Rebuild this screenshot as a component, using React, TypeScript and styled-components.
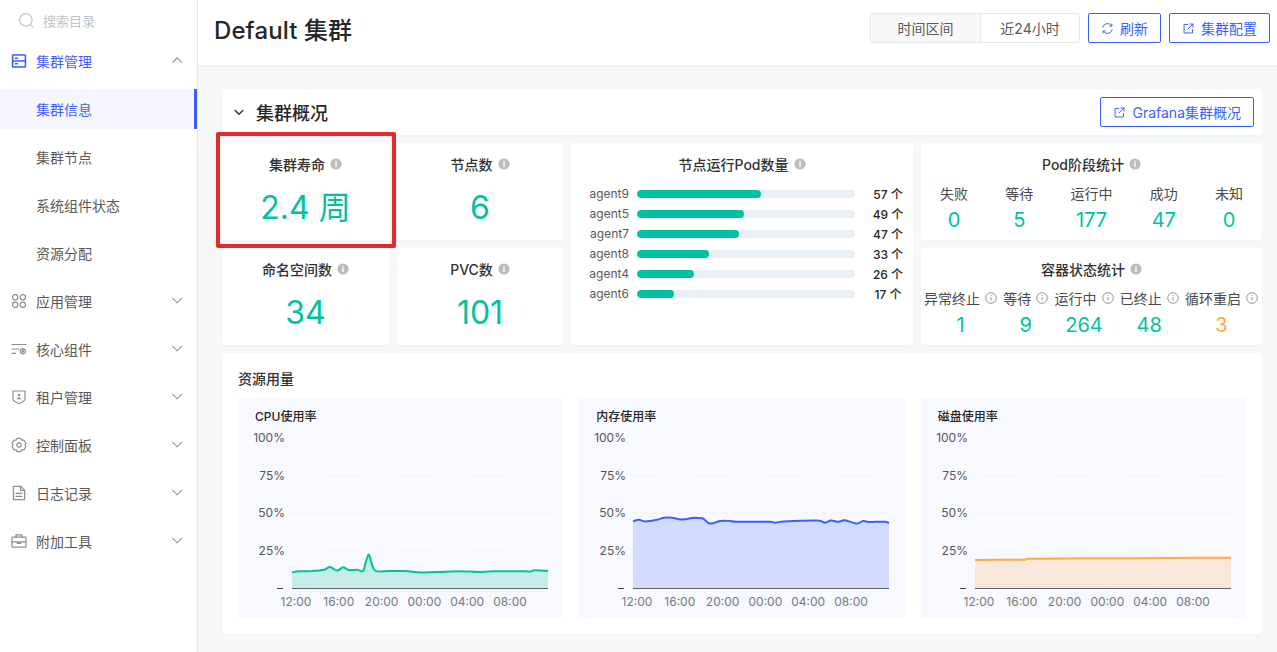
import React from 'react';
import styled, { createGlobalStyle } from 'styled-components';

const GlobalStyle = createGlobalStyle`
  html, body {
    margin: 0;
    padding: 0;
    height: 100%;
    overflow: hidden;
    background: #f8f8f8;
    font-family: Inter, "Noto Sans CJK SC", sans-serif;
  }
  * { box-sizing: border-box; }
`;

const BLUE = '#3d5eff';
const GREEN = '#00c2a0';
const ORANGE = '#ffa940';

const Layout = styled.div`
  display: flex;
  width: 1277px;
  height: 652px;
  overflow: hidden;
`;

const Sidebar = styled.aside`
  flex: 0 0 198px;
  height: 100%;
  background: #fff;
  border-right: 1px solid #e4e5ee;
`;

const SearchBox = styled.div`
  display: flex;
  align-items: center;
  gap: 8px;
  height: 37px;
  padding: 4px 0 0 18px;
  color: #c0c2c9;
  font-size: 13px;
`;

const NavList = styled.nav`
  display: flex;
  flex-direction: column;
  gap: 8px;
  padding-top: 4px;
`;

const NavItem = styled.div<{ $active?: boolean; $open?: boolean }>`
  display: flex;
  align-items: center;
  height: 40px;
  padding-left: ${p => (p.$open === undefined ? '36px' : '11px')};
  padding-right: 12px;
  font-size: 14px;
  color: ${p => (p.$active ? BLUE : '#595959')};
  background: ${p => (p.$active && p.$open === undefined ? '#f5f6fe' : 'transparent')};
  border-right: ${p => (p.$active && p.$open === undefined ? `3px solid ${BLUE}` : 'none')};
`;

const NavIcon = styled.span`
  display: flex;
  width: 25px;
  flex: none;
`;

const NavLabel = styled.span`
  flex: 1;
`;

const Main = styled.main`
  flex: 1;
  min-width: 0;
  display: flex;
  flex-direction: column;
`;

const Header = styled.header`
  display: flex;
  align-items: center;
  justify-content: space-between;
  height: 65px;
  padding: 0 7px 9px 16px;
  background: #fff;
  box-shadow: 0 2px 6px rgba(0, 0, 0, 0.03);
`;

const PageTitle = styled.h1`
  margin: 0;
  font-size: 24px;
  font-weight: 500;
  color: #262626;
  letter-spacing: 0.1px;
`;

const HeaderActions = styled.div`
  display: flex;
  align-items: center;
  gap: 8px;
`;

const Segment = styled.div`
  display: flex;
  height: 30px;
  border: 1px solid #e8e8e8;
  border-radius: 2px;
  font-size: 14px;
  color: #595959;
`;

const SegmentCell = styled.div<{ $muted?: boolean }>`
  display: flex;
  align-items: center;
  justify-content: center;
  width: ${p => (p.$muted ? '110px' : '98px')};
  background: ${p => (p.$muted ? '#f8f8f8' : '#fff')};
  border-right: ${p => (p.$muted ? '1px solid #e8e8e8' : 'none')};
`;

const LinkButton = styled.button`
  display: inline-flex;
  align-items: center;
  justify-content: center;
  gap: 6px;
  height: 30px;
  padding: 0 12px;
  background: #fff;
  border: 1px solid ${BLUE};
  border-radius: 2px;
  color: ${BLUE};
  font: inherit;
  font-size: 14px;
`;

const Content = styled.div`
  display: flex;
  flex-direction: column;
  gap: 8px;
  padding: 24px 15px 0 24px;
`;

const Card = styled.section`
  background: #fff;
  border-radius: 4px;
  box-shadow: 0 2px 6px rgba(0, 0, 0, 0.025);
`;

const SectionBar = styled(Card)`
  display: flex;
  align-items: center;
  justify-content: space-between;
  height: 46px;
  padding: 0 8px 0 11px;
`;

const SectionTitle = styled.h2`
  display: flex;
  align-items: center;
  gap: 11px;
  margin: 0;
  font-size: 18px;
  font-weight: 500;
  color: #262626;
`;

const OverviewGrid = styled.div`
  display: grid;
  grid-template-columns: 167px 166px 342px 341px;
  grid-template-rows: 97px 97px;
  gap: 8px;
`;

const StatCard = styled(Card)`
  position: relative;
  padding-top: 11px;
  text-align: center;
`;

const Highlight = styled.div`
  position: absolute;
  top: -11px;
  left: -6px;
  right: -7px;
  bottom: -8px;
  border: 4px solid #e52a2a;
  border-radius: 2px;
`;

const CardTitle = styled.div`
  display: flex;
  align-items: center;
  justify-content: center;
  gap: 5px;
  height: 20px;
  font-size: 14px;
  font-weight: 500;
  color: #333;
`;

const BigValue = styled.div`
  margin-top: 14px;
  font-size: 32px;
  line-height: 40px;
  color: ${GREEN};
`;

const PodCard = styled(Card)`
  grid-column: 3;
  grid-row: 1 / 3;
  padding-top: 11px;
`;

const BarList = styled.div`
  display: flex;
  flex-direction: column;
  gap: 4px;
  margin-top: 11px;
`;

const BarRow = styled.div`
  display: grid;
  grid-template-columns: 58px 218px 50px;
  gap: 8px;
  align-items: center;
  height: 16px;
`;

const BarLabel = styled.span`
  text-align: right;
  font-size: 12px;
  color: #595959;
`;

const BarTrack = styled.div`
  height: 8px;
  border-radius: 4px;
  background: #e9edf6;
  overflow: hidden;
`;

const BarFill = styled.div`
  height: 100%;
  border-radius: 4px;
  background: ${GREEN};
`;

const BarValue = styled.span`
  text-align: center;
  font-size: 12px;
  font-weight: 500;
  color: #262626;
`;

const MetricCard = styled(Card)`
  padding-top: 11px;
`;

const MetricRow = styled.div<{ $tight?: boolean }>`
  display: flex;
  justify-content: space-between;
  margin-top: 9px;
  padding: 0 ${p => (p.$tight ? '4px' : '19px')} 0 ${p => (p.$tight ? '3px' : '19px')};
`;

const Metric = styled.div`
  display: flex;
  flex-direction: column;
  align-items: center;
`;

const MetricLabel = styled.div`
  display: flex;
  align-items: center;
  gap: 5px;
  height: 20px;
  font-size: 14px;
  color: #4a4a4a;
`;

const MetricValue = styled.div<{ $warn?: boolean }>`
  margin-top: 4px;
  font-size: 20px;
  line-height: 26px;
  color: ${p => (p.$warn ? ORANGE : GREEN)};
`;

const UsageCard = styled(Card)`
  height: 281px;
  padding: 16px 16px 0;
`;

const UsageTitle = styled.div`
  font-size: 14px;
  font-weight: 500;
  line-height: 20px;
  color: #333;
`;

const ChartGrid = styled.div`
  display: grid;
  grid-template-columns: repeat(3, 1fr);
  gap: 16px;
  margin-top: 9px;
`;

const ChartPanel = styled.div`
  height: 220px;
  padding-top: 11px;
  border-radius: 4px;
  background: #f8f9ff;
`;

const ChartTitle = styled.div`
  padding-left: 17px;
  font-size: 12px;
  font-weight: 500;
  line-height: 16px;
  color: #262626;
`;

const ChartSvg = styled.svg`
  display: block;
  margin-top: 5px;
`;

const AxisText = styled.text<{ $dim?: boolean }>`
  font-size: 12px;
  fill: ${p => (p.$dim ? '#77787c' : '#55565a')};
`;

const Icon: React.FC<{ size?: number; color?: string; children: React.ReactNode }> = ({ size = 16, color = 'currentColor', children }) => (
  <svg width={size} height={size} viewBox="0 0 16 16" fill="none" stroke={color} strokeWidth="1.2" strokeLinecap="round" strokeLinejoin="round" style={{ flex: 'none' }}>
    {children}
  </svg>
);

const SearchIcon = () => (
  <Icon size={17} color="#c4c6cc">
    <circle cx="7.4" cy="7.4" r="5.9" />
    <path d="M12 12l2.2 2.2" />
  </Icon>
);

const ChevronUp = () => (
  <Icon size={14} color="#85878e"><path d="M2 9.5l5-5 5 5" /></Icon>
);

const ChevronDown = () => (
  <Icon size={14} color="#85878e"><path d="M2 5l5 5 5-5" /></Icon>
);

const ClusterIcon = () => (
  <Icon color={BLUE}>
    <rect x="1.6" y="2" width="12.8" height="12" rx="0.6" strokeWidth="1.6" />
    <path d="M1.6 8h12.8M4.4 5.2h2M4.4 10.8h2" strokeWidth="1.6" />
  </Icon>
);

const AppsIcon = () => (
  <Icon color="#8c8e94">
    <rect x="1.6" y="1.6" width="5.2" height="5.2" rx="2.4" />
    <rect x="9.2" y="1.6" width="5.2" height="5.2" rx="2.4" />
    <rect x="1.6" y="9.2" width="5.2" height="5.2" rx="2.4" />
    <rect x="9.2" y="9.2" width="5.2" height="5.2" rx="2.4" />
  </Icon>
);

const CoreIcon = () => (
  <Icon color="#8c8e94">
    <path d="M1 3.5h14M1 8h7M1 12.3h3.5" />
    <path d="M11.8 7.6l2.4 1.3v2.7l-2.4 1.3-2.4-1.3V8.9z" />
    <circle cx="11.8" cy="10.2" r="0.7" />
  </Icon>
);

const TenantIcon = () => (
  <Icon color="#8c8e94">
    <path d="M2 2h12v8c0 1.9-3.4 3.5-6 4.6-2.6-1.1-6-2.7-6-4.6z" />
    <circle cx="8" cy="6" r="1.3" fill="#8c8e94" stroke="none" />
    <path d="M5.4 10.2c.5-1.3 1.5-1.8 2.6-1.8s2.1.5 2.6 1.8z" fill="#8c8e94" stroke="none" />
  </Icon>
);

const ControlIcon = () => (
  <Icon color="#8c8e94">
    <path d="M6 1.4h4l.9 1.8 2-.1 2 3.4-1.100 1.500 1.100 1.500-2 3.400-2-.1-.9 1.800H6l-.9-1.800-2 .1-2-3.400L2.200 8 1.100 6.500l2-3.400 2 .1z" />
    <circle cx="8" cy="8" r="2.1" />
  </Icon>
);

const LogIcon = () => (
  <Icon color="#8c8e94">
    <path d="M2.4 1.4h7.400l3.800 3.800v9.400H2.400z" />
    <path d="M9.6 1.4v4h4M5 8.400h6M5 11.400h6" />
  </Icon>
);

const ToolIcon = () => (
  <Icon color="#8c8e94">
    <rect x="1" y="4.2" width="14" height="10" rx="0.6" />
    <path d="M5 4.2V1.8h6v2.400M1 8.800h14M6.400 8.800v1.600h3.200V8.800" />
  </Icon>
);

const ExternalIcon = () => (
  <Icon size={13}>
    <path d="M7 3H2.5v10.500H13V9" />
    <path d="M9.5 2.5h4v4M13.500 2.500L7.500 8.500" />
  </Icon>
);

const RefreshIcon = () => (
  <Icon size={13}>
    <path d="M2.2 6.4A6 6 0 0 1 13 4.6M13.8 9.6A6 6 0 0 1 3 11.4" />
    <path d="M13.4 2.4v2.600h-2.600M2.6 13.6V11h2.600" />
  </Icon>
);

const InfoFilled = () => (
  <svg width="12" height="12" viewBox="0 0 12 12" style={{ flex: 'none' }}>
    <circle cx="6" cy="6" r="5.6" fill="#bdbdbd" />
    <rect x="5.3" y="5" width="1.4" height="4" fill="#fff" />
    <rect x="5.3" y="2.9" width="1.4" height="1.4" fill="#fff" />
  </svg>
);

const InfoOutline = () => (
  <svg width="12" height="12" viewBox="0 0 12 12" fill="none" style={{ flex: 'none' }}>
    <circle cx="6" cy="6" r="5.3" stroke="#8c8c8c" strokeWidth="0.9" />
    <path d="M6 5.2v3.3M6 3.2v.9" stroke="#8c8c8c" strokeWidth="1" />
  </svg>
);

type Point = [number, number];

const PLOT_LEFT = 54;
const PLOT_WIDTH = 256;
const PLOT_TOP = 8;
const PLOT_HEIGHT = 150;

const toX = (offset: number) => PLOT_LEFT + offset;
const toY = (value: number) => PLOT_TOP + PLOT_HEIGHT * (1 - value / 100);

// catmull-rom through the sampled points, so the line does not look faceted
function smoothPath(points: Point[]) {
  const pts = points.map(([x, v]) => [toX(x), toY(v)]);
  let d = `M${pts[0][0]} ${pts[0][1]}`;
  for (let i = 0; i < pts.length - 1; i++) {
    const p0 = pts[i - 1] || pts[i];
    const p1 = pts[i];
    const p2 = pts[i + 1];
    const p3 = pts[i + 2] || p2;
    const c1x = p1[0] + (p2[0] - p0[0]) / 6;
    const c1y = p1[1] + (p2[1] - p0[1]) / 6;
    const c2x = p2[0] - (p3[0] - p1[0]) / 6;
    const c2y = p2[1] - (p3[1] - p1[1]) / 6;
    d += `C${c1x.toFixed(1)} ${c1y.toFixed(1)} ${c2x.toFixed(1)} ${c2y.toFixed(1)} ${p2[0].toFixed(1)} ${p2[1].toFixed(1)}`;
  }
  return d;
}

const Y_TICKS = [100, 75, 50, 25];
const X_TICKS = ['12:00', '16:00', '20:00', '00:00', '04:00', '08:00'];

const cpuData: Point[] = [
  [0, 10.4], [7, 11.2], [20, 11.3], [32, 12.2], [38, 14], [45, 11.6], [51, 13.8], [57, 12], [65, 12.2], [71, 11.3],
  [74, 17.8], [77, 22.2], [80, 15.5], [84, 11.3], [97, 11.3], [113, 11.3], [130, 10.4], [150, 10.7],
  [167, 11.1], [187, 10.7], [200, 11.1], [233, 11.1], [238, 10.9], [243, 11.8], [256, 11.3],
];

const memData: Point[] = [
  [0, 44.4], [6, 45.5], [12, 44.4], [24, 45.5], [31, 46.9], [39, 46.9], [46, 45.8], [52, 45.8],
  [59, 46.7], [69, 46.5], [72, 45.3], [76, 43.1], [81, 43.3], [87, 44.7], [97, 44.7], [104, 44.2],
  [137, 44.2], [142, 43.5], [151, 44.4], [184, 44.9], [192, 43.5], [198, 44.9], [206, 44.2], [212, 45.1],
  [224, 42.9], [230, 44.7], [236, 44], [251, 44.2], [256, 43.3],
];

const diskData: Point[] = [
  [0, 18.7], [47, 18.9], [52, 19.5], [65, 19.5], [110, 19.8], [150, 19.8], [190, 20], [256, 20.2],
];

const UsageChart: React.FC<{ title: string; data: Point[]; line: string; fill: string }> = ({ title, data, line, fill }) => {
  const path = smoothPath(data);
  const base = toY(0);
  return (
    <ChartPanel>
      <ChartTitle>{title}</ChartTitle>
      <ChartSvg width="325" height="186" viewBox="0 0 325 186">
        {Y_TICKS.map(t => (
          <g key={t}>
            <line x1={PLOT_LEFT} x2={PLOT_LEFT + PLOT_WIDTH} y1={toY(t)} y2={toY(t)} stroke="#eceef4" strokeDasharray="5 4" />
            <AxisText x={PLOT_LEFT - 7} y={toY(t) + 4} textAnchor="end">{t}%</AxisText>
          </g>
        ))}
        <path d={`${path}L${toX(PLOT_WIDTH)} ${base}L${toX(0)} ${base}Z`} fill={fill} />
        <path d={path} fill="none" stroke={line} strokeWidth="2" strokeLinejoin="round" />
        <line x1={PLOT_LEFT} x2={PLOT_LEFT + PLOT_WIDTH} y1={base + 0.5} y2={base + 0.5} stroke="#5f6066" />
        <line x1={PLOT_LEFT - 15} x2={PLOT_LEFT - 9} y1={base + 0.5} y2={base + 0.5} stroke="#45464a" />
        {X_TICKS.map((t, i) => (
          <AxisText key={t} $dim x={58 + i * 42.8} y={base + 18} textAnchor="middle">{t}</AxisText>
        ))}
      </ChartSvg>
    </ChartPanel>
  );
};

const NAV_ITEMS = [
  { label: '应用管理', icon: <AppsIcon /> },
  { label: '核心组件', icon: <CoreIcon /> },
  { label: '租户管理', icon: <TenantIcon /> },
  { label: '控制面板', icon: <ControlIcon /> },
  { label: '日志记录', icon: <LogIcon /> },
  { label: '附加工具', icon: <ToolIcon /> },
];

const SUB_ITEMS = ['集群信息', '集群节点', '系统组件状态', '资源分配'];

const AGENTS = [
  { name: 'agent9', count: 57 },
  { name: 'agent5', count: 49 },
  { name: 'agent7', count: 47 },
  { name: 'agent8', count: 33 },
  { name: 'agent4', count: 26 },
  { name: 'agent6', count: 17 },
];

const POD_PHASES = [
  { label: '失败', value: 0 },
  { label: '等待', value: 5 },
  { label: '运行中', value: 177 },
  { label: '成功', value: 47 },
  { label: '未知', value: 0 },
];

const CONTAINER_STATES = [
  { label: '异常终止', value: 1 },
  { label: '等待', value: 9 },
  { label: '运行中', value: 264 },
  { label: '已终止', value: 48 },
  { label: '循环重启', value: 3, warn: true },
];

const App: React.FC = () => (
  <Layout>
    <GlobalStyle />
    <Sidebar>
      <SearchBox>
        <SearchIcon />
        搜索目录
      </SearchBox>
      <NavList>
        <NavItem $active $open>
          <NavIcon><ClusterIcon /></NavIcon>
          <NavLabel>集群管理</NavLabel>
          <ChevronUp />
        </NavItem>
        {SUB_ITEMS.map((label, i) => (
          <NavItem key={label} $active={i === 0}>{label}</NavItem>
        ))}
        {NAV_ITEMS.map(item => (
          <NavItem key={item.label} $open={false}>
            <NavIcon>{item.icon}</NavIcon>
            <NavLabel>{item.label}</NavLabel>
            <ChevronDown />
          </NavItem>
        ))}
      </NavList>
    </Sidebar>
    <Main>
      <Header>
        <PageTitle>Default 集群</PageTitle>
        <HeaderActions>
          <Segment>
            <SegmentCell $muted>时间区间</SegmentCell>
            <SegmentCell>近24小时</SegmentCell>
          </Segment>
          <LinkButton><RefreshIcon />刷新</LinkButton>
          <LinkButton><ExternalIcon />集群配置</LinkButton>
        </HeaderActions>
      </Header>
      <Content>
        <SectionBar>
          <SectionTitle>
            <Icon size={12} color="#333"><path d="M3 6l5 5 5-5" strokeWidth="2" /></Icon>
            集群概况
          </SectionTitle>
          <LinkButton><ExternalIcon />Grafana集群概况</LinkButton>
        </SectionBar>
        <OverviewGrid>
          <StatCard>
            <CardTitle>集群寿命 <InfoFilled /></CardTitle>
            <BigValue>2.4 周</BigValue>
            <Highlight />
          </StatCard>
          <StatCard>
            <CardTitle>节点数 <InfoFilled /></CardTitle>
            <BigValue>6</BigValue>
          </StatCard>
          <PodCard>
            <CardTitle>节点运行Pod数量 <InfoFilled /></CardTitle>
            <BarList>
              {AGENTS.map(a => (
                <BarRow key={a.name}>
                  <BarLabel>{a.name}</BarLabel>
                  <BarTrack><BarFill style={{ width: `${a.count}%` }} /></BarTrack>
                  <BarValue>{a.count} 个</BarValue>
                </BarRow>
              ))}
            </BarList>
          </PodCard>
          <MetricCard>
            <CardTitle>Pod阶段统计 <InfoFilled /></CardTitle>
            <MetricRow>
              {POD_PHASES.map(m => (
                <Metric key={m.label}>
                  <MetricLabel>{m.label}</MetricLabel>
                  <MetricValue>{m.value}</MetricValue>
                </Metric>
              ))}
            </MetricRow>
          </MetricCard>
          <StatCard>
            <CardTitle>命名空间数 <InfoFilled /></CardTitle>
            <BigValue>34</BigValue>
          </StatCard>
          <StatCard>
            <CardTitle>PVC数 <InfoFilled /></CardTitle>
            <BigValue>101</BigValue>
          </StatCard>
          <MetricCard>
            <CardTitle>容器状态统计 <InfoFilled /></CardTitle>
            <MetricRow $tight>
              {CONTAINER_STATES.map(m => (
                <Metric key={m.label}>
                  <MetricLabel>{m.label}<InfoOutline /></MetricLabel>
                  <MetricValue $warn={m.warn}>{m.value}</MetricValue>
                </Metric>
              ))}
            </MetricRow>
          </MetricCard>
        </OverviewGrid>
        <UsageCard>
          <UsageTitle>资源用量</UsageTitle>
          <ChartGrid>
            <UsageChart title="CPU使用率" data={cpuData} line={GREEN} fill="#c5ede8" />
            <UsageChart title="内存使用率" data={memData} line={BLUE} fill="#d2dbfd" />
            <UsageChart title="磁盘使用率" data={diskData} line={ORANGE} fill="#f8e8db" />
          </ChartGrid>
        </UsageCard>
      </Content>
    </Main>
  </Layout>
);

export default App;
